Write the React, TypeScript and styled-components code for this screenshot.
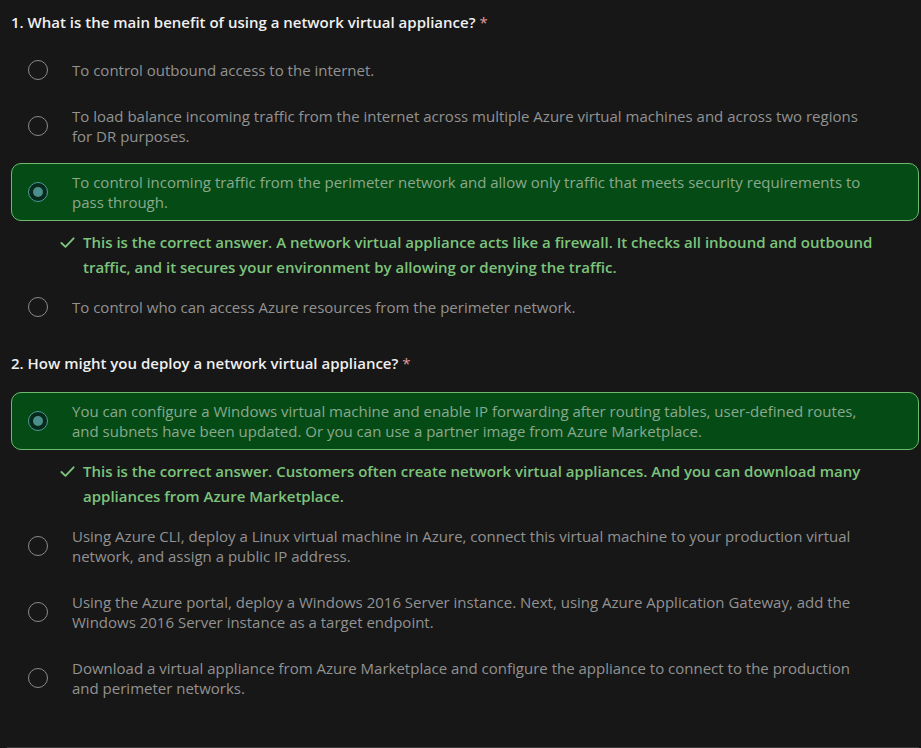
import React from "react";
import styled, { createGlobalStyle } from "styled-components";

const GlobalStyle = createGlobalStyle`
  html, body { margin: 0; padding: 0; background: #171717; }
  body { font-family: "Open Sans", "Noto Sans", sans-serif; }
`;

const Page = styled.div`
  min-height: 748px;
  box-sizing: border-box;
  padding: 12px 2px 0 11px;
  display: flex;
  flex-direction: column;
  background: #171717;
`;

const Question = styled.section`
  display: flex;
  flex-direction: column;
  & + & {
    margin-top: 27px;
  }
`;

const Title = styled.h2`
  margin: 0 0 19px;
  font-size: 15px;
  line-height: 20px;
  font-weight: 600;
  color: #f0f0f0;
`;

const Required = styled.span`
  color: #e39a9a;
  font-weight: 400;
  margin-left: 4px;
`;

const OptionList = styled.div`
  display: flex;
  flex-direction: column;
  gap: 8px;
`;

const Option = styled.label<{ $selected?: boolean }>`
  display: flex;
  align-items: center;
  gap: 24px;
  padding: 8px 40px 8px 16px;
  border: 1px solid ${(p) => (p.$selected ? "#6cbb6c" : "transparent")};
  border-radius: 10px;
  background: ${(p) => (p.$selected ? "#054b16" : "transparent")};
  cursor: pointer;
`;

const Radio = styled.span<{ $selected?: boolean }>`
  flex: 0 0 auto;
  width: 20px;
  height: 20px;
  box-sizing: border-box;
  border-radius: 50%;
  border: ${(p) => (p.$selected ? "1px solid #4e9b96" : "1.5px solid #8a8a8a")};
  background: ${(p) => (p.$selected ? "#072a1a" : "transparent")};
  display: flex;
  align-items: center;
  justify-content: center;
`;

const Dot = styled.span`
  width: 10px;
  height: 10px;
  border-radius: 50%;
  background: #4a8f8b;
`;

const OptionText = styled.span<{ $selected?: boolean }>`
  font-size: 15px;
  line-height: 20px;
  color: ${(p) => (p.$selected ? "#8aa98d" : "#929292")};
`;

const Feedback = styled.div`
  display: flex;
  align-items: flex-start;
  gap: 8px;
  padding: 1px 19px 0 49px;
  font-size: 15px;
  line-height: 25px;
  font-weight: 600;
  color: #7cc47c;
`;

const CheckIcon = styled.svg`
  flex: 0 0 auto;
  width: 15px;
  height: 15px;
  margin-top: 5px;
`;

const Divider = styled.hr`
  margin: 40px 0 0 -4px;
  border: 0;
  border-top: 1px solid #3b3b3b;
  height: 0;
`;

type Opt = { text: string; selected?: boolean; feedback?: string };
type Q = { title: string; options: Opt[] };

const questions: Q[] = [
  {
    title: "1. What is the main benefit of using a network virtual appliance?",
    options: [
      { text: "To control outbound access to the internet." },
      {
        text:
          "To load balance incoming traffic from the internet across multiple Azure virtual machines and across two regions for DR purposes.",
      },
      {
        text:
          "To control incoming traffic from the perimeter network and allow only traffic that meets security requirements to pass through.",
        selected: true,
        feedback:
          "This is the correct answer. A network virtual appliance acts like a firewall. It checks all inbound and outbound traffic, and it secures your environment by allowing or denying the traffic.",
      },
      { text: "To control who can access Azure resources from the perimeter network." },
    ],
  },
  {
    title: "2. How might you deploy a network virtual appliance?",
    options: [
      {
        text:
          "You can configure a Windows virtual machine and enable IP forwarding after routing tables, user-defined routes, and subnets have been updated. Or you can use a partner image from Azure Marketplace.",
        selected: true,
        feedback:
          "This is the correct answer. Customers often create network virtual appliances. And you can download many appliances from Azure Marketplace.",
      },
      {
        text:
          "Using Azure CLI, deploy a Linux virtual machine in Azure, connect this virtual machine to your production virtual network, and assign a public IP address.",
      },
      {
        text:
          "Using the Azure portal, deploy a Windows 2016 Server instance. Next, using Azure Application Gateway, add the Windows 2016 Server instance as a target endpoint.",
      },
      {
        text:
          "Download a virtual appliance from Azure Marketplace and configure the appliance to connect to the production and perimeter networks.",
      },
    ],
  },
];

export default function App() {
  return (
    <Page>
      <GlobalStyle />
      {questions.map((q) => (
        <Question key={q.title}>
          <Title>
            {q.title}
            <Required>*</Required>
          </Title>
          <OptionList>
            {q.options.map((o) => (
              <React.Fragment key={o.text}>
                <Option $selected={o.selected}>
                  <Radio $selected={o.selected}>{o.selected && <Dot />}</Radio>
                  <OptionText $selected={o.selected}>{o.text}</OptionText>
                </Option>
                {o.feedback && (
                  <Feedback>
                    <CheckIcon viewBox="0 0 16 16" fill="none">
                      <path
                        d="M1.5 8.5 L5.8 12.6 L14.5 3.5"
                        stroke="#7cc47c"
                        strokeWidth="2"
                        strokeLinecap="round"
                        strokeLinejoin="round"
                      />
                    </CheckIcon>
                    <span>{o.feedback}</span>
                  </Feedback>
                )}
              </React.Fragment>
            ))}
          </OptionList>
        </Question>
      ))}
      <Divider />
    </Page>
  );
}
